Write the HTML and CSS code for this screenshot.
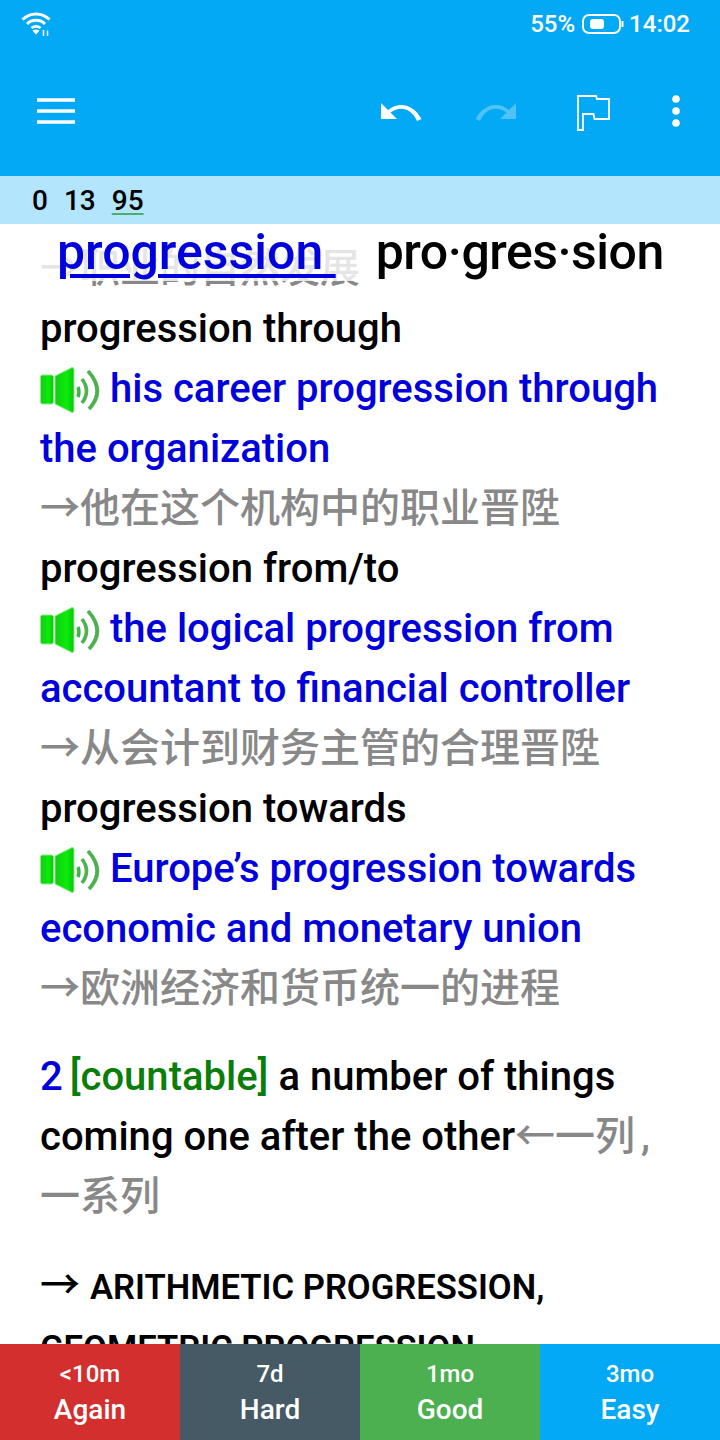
FILE: index.html
```html
<!DOCTYPE html>
<html>
  <head>
    <title>Review</title>
    <meta charset="utf-8" />
    <meta name="viewport" content="width=device-width" />
    <link rel="stylesheet" href="styles.css">
  </head>
  <body>

    <div id="top">
      <div id="status">
        <svg class="wifi" width="30" height="26" viewBox="0 0 30 26">
          <path d="M1.5 8.5 C9 1 21 1 28.5 8.5" fill="none" stroke="#fff" stroke-width="3"/>
          <path d="M6 13 C11 8 19 8 24 13" fill="none" stroke="#fff" stroke-width="3"/>
          <path d="M10.5 17 C13 14.8 17 14.8 19.5 17" fill="none" stroke="#fff" stroke-width="2.6"/>
          <path d="M11.5 19.8 C14 18 16 18 18.5 19.8 L15 23.5 Z" fill="#fff"/>
          <path d="M22.5 19 V25 M26.5 19.5 V25" stroke="#fff" stroke-width="1.5"/>
        </svg>
        <div style="flex: 1;"></div>
        <span class="battery_pct">55%</span>
        <svg class="battery" width="42" height="22" viewBox="0 0 42 22">
          <rect x="1" y="2" width="37" height="18" rx="6" fill="none" stroke="#fff" stroke-width="2"/>
          <rect x="8" y="6" width="14" height="10" rx="3" fill="#fff"/>
          <rect x="39.5" y="8" width="2" height="6" fill="#fff"/>
        </svg>
        <span class="clock">14:02</span>
      </div>
      <div id="toolbar">
        <svg class="menu" width="38" height="26" viewBox="0 0 38 26">
          <path d="M0 2 H38 M0 13 H38 M0 24 H38" stroke="#fff" stroke-width="3.4"/>
        </svg>
        <div style="flex: 1;"></div>
        <svg class="undo" width="42" height="20" viewBox="0 0 42 20">
          <path d="M1 2 L1 18 L17 18 L10.5 11.5 C19 5 31 6 37 20 L41.5 18 C33 2 18 0.5 8 9 Z" fill="#fff"/>
        </svg>
        <svg class="redo" width="42" height="20" viewBox="0 0 42 20">
          <path d="M41 2 L41 18 L25 18 L31.5 11.5 C23 5 11 6 5 20 L0.5 18 C9 2 24 0.5 34 9 Z" fill="#fff"/>
        </svg>
        <svg class="flag" width="33" height="36" viewBox="0 0 33 36">
          <path d="M1 1 H19 L20 4 H32 V24 H17.5 L16.5 19 H6 V35 H1 Z" fill="none" stroke="#fff" stroke-width="1.8"/>
        </svg>
        <svg class="more" width="8" height="32" viewBox="0 0 8 32">
          <circle cx="4" cy="4" r="3.8" fill="#fff"/>
          <circle cx="4" cy="16" r="3.8" fill="#fff"/>
          <circle cx="4" cy="28" r="3.8" fill="#fff"/>
        </svg>
      </div>
    </div>

    <div id="counts">
      <span>0</span>
      <span>13</span>
      <span class="current">95</span>
    </div>

    <div id="card">
      <div id="headword"><span class="word">progression </span><span class="hyph">pro·gres·sion</span></div>
      <div id="entry">
        <div class="zh">→职业的自然发展</div>
        <div>progression through</div>
        <div class="ex"><svg class="speaker" width="60" height="46" viewBox="0 0 60 46"><use href="#spk"/></svg>his career progression through the organization</div>
        <div class="zh">→他在这个机构中的职业晋陞</div>
        <div>progression from/to</div>
        <div class="ex"><svg class="speaker" width="60" height="46" viewBox="0 0 60 46"><use href="#spk"/></svg>the logical progression from accountant to financial controller</div>
        <div class="zh">→从会计到财务主管的合理晋陞</div>
        <div>progression towards</div>
        <div class="ex"><svg class="speaker" width="60" height="46" viewBox="0 0 60 46"><use href="#spk"/></svg>Europe’s progression towards economic and monetary union</div>
        <div class="zh">→欧洲经济和货币统一的进程</div>
        <div class="sense"><span class="num">2</span> <span class="gram">[countable]</span> a number of things coming one after the other<span class="zh">←一列<span class="comma">,</span> 一系列</span></div>
        <div class="xref"><span class="xarrow">→</span> <span class="caps">ARITHMETIC PROGRESSION, GEOMETRIC PROGRESSION</span></div>
      </div>
    </div>

    <div id="answers">
      <div class="btn again"><span class="ivl">&lt;10m</span><span class="lbl">Again</span></div>
      <div class="btn hard"><span class="ivl">7d</span><span class="lbl">Hard</span></div>
      <div class="btn good"><span class="ivl">1mo</span><span class="lbl">Good</span></div>
      <div class="btn easy"><span class="ivl">3mo</span><span class="lbl">Easy</span></div>
    </div>

    <svg width="0" height="0" class="defs">
      <defs>
        <linearGradient id="spk_fill" x1="0" x2="1" y1="0" y2="0">
          <stop offset="0" stop-color="#16c916"/>
          <stop offset="0.6" stop-color="#08ee08"/>
          <stop offset="1" stop-color="#0cc40c"/>
        </linearGradient>
        <g id="spk">
          <rect x="0.5" y="8" width="13" height="29" rx="2" fill="url(#spk_fill)" stroke="#8fe88f" stroke-width="1"/>
          <path d="M15 9 L32 0.5 Q34 0 34 3 V43 Q34 46 32 45.5 L15 37 Z" fill="url(#spk_fill)" stroke="#8fe88f" stroke-width="1"/>
          <path d="M38 20 Q40 25 38 30" fill="none" stroke="#3db53d" stroke-width="3.4"/>
          <path d="M42 12 Q51 24 42 36" fill="none" stroke="#4fb04f" stroke-width="3.6"/>
          <path d="M48 4 Q66 24 49 42" fill="none" stroke="#4fb04f" stroke-width="3.8"/>
        </g>
      </defs>
    </svg>

  </body>
</html>
```

FILE: styles.css
```css
html, body {
    margin: 0;
    padding: 0;
}
body {
    font-family: Roboto, "Noto Sans CJK SC", sans-serif;
    display: flex;
    flex-direction: column;
    width: 720px;
    height: 1440px;
    overflow: hidden;
    background: #fff;
    color: #000;
}

#top {
    background: #03a9f4;
    height: 176px;
    flex: none;
    display: flex;
    flex-direction: column;
}
#status {
    display: flex;
    align-items: center;
    height: 48px;
    padding: 0 30px 0 21px;
    color: #fff;
    font-size: 24px;
    font-weight: 500;
}
.battery {
    margin: 0 5px 0 7px;
}
#toolbar {
    display: flex;
    align-items: center;
    flex: 1;
    padding: 0 40px 2px 37px;
}
.undo {
    margin-right: 53px;
}
.redo {
    opacity: 0.3;
    margin-right: 60px;
}
.flag {
    margin-right: 62px;
    margin-top: 4px;
}

#counts {
    background: #b3e5fc;
    height: 48px;
    flex: none;
    display: flex;
    align-items: center;
    gap: 16px;
    padding-left: 32px;
    font-size: 28px;
    font-weight: 500;
}
#counts .current {
    text-decoration: underline;
    text-decoration-color: #4fae6c;
    text-decoration-thickness: 2px;
    text-underline-offset: 3px;
}

#card {
    flex: 1;
    position: relative;
    overflow: hidden;
}
#headword {
    position: absolute;
    top: 0;
    left: 0;
    right: 0;
    height: 57px;
    padding-left: 57px;
    background: rgba(255, 255, 255, 0.78);
    font-size: 50px;
    font-weight: 500;
    line-height: 57px;
    white-space: nowrap;
}
.word {
    color: #0000dd;
    white-space: pre;
    text-decoration: underline;
    text-decoration-thickness: 4px;
    text-underline-offset: 5px;
}
.hyph {
    margin-left: 40px;
    letter-spacing: -0.5px;
}

#entry {
    padding: 15px 40px 0 40px;
    font-size: 40px;
    font-weight: 500;
    line-height: 60px;
}
.zh {
    color: #888;
    font-size: 40px;
}
.ex {
    color: #0000dd;
}
.speaker {
    vertical-align: -11px;
    margin-right: 10px;
}
.sense {
    margin-top: 28px;
}
.num {
    color: #0000dd;
    margin-right: -3px;
}
.gram {
    color: #0a7d0a;
}
.comma {
    margin-left: 6px;
}
.xref {
    margin-top: 29px;
}
.xarrow {
    font-size: 40px;
}
.caps {
    font-size: 34.6px;
    font-weight: 600;
}

#answers {
    display: flex;
    height: 96px;
    flex: none;
    position: relative;
}
.btn {
    flex: 1;
    display: flex;
    flex-direction: column;
    align-items: center;
    justify-content: center;
    gap: 4px;
    padding-top: 2px;
    color: #fff;
    font-weight: 500;
}
.ivl {
    font-size: 24px;
    line-height: 30px;
}
.lbl {
    font-size: 28px;
    line-height: 34px;
}
.again { background: #d32f2f; }
.hard { background: #455a64; }
.good { background: #4caf50; }
.easy { background: #03a9f4; }

.defs {
    position: absolute;
}
```
